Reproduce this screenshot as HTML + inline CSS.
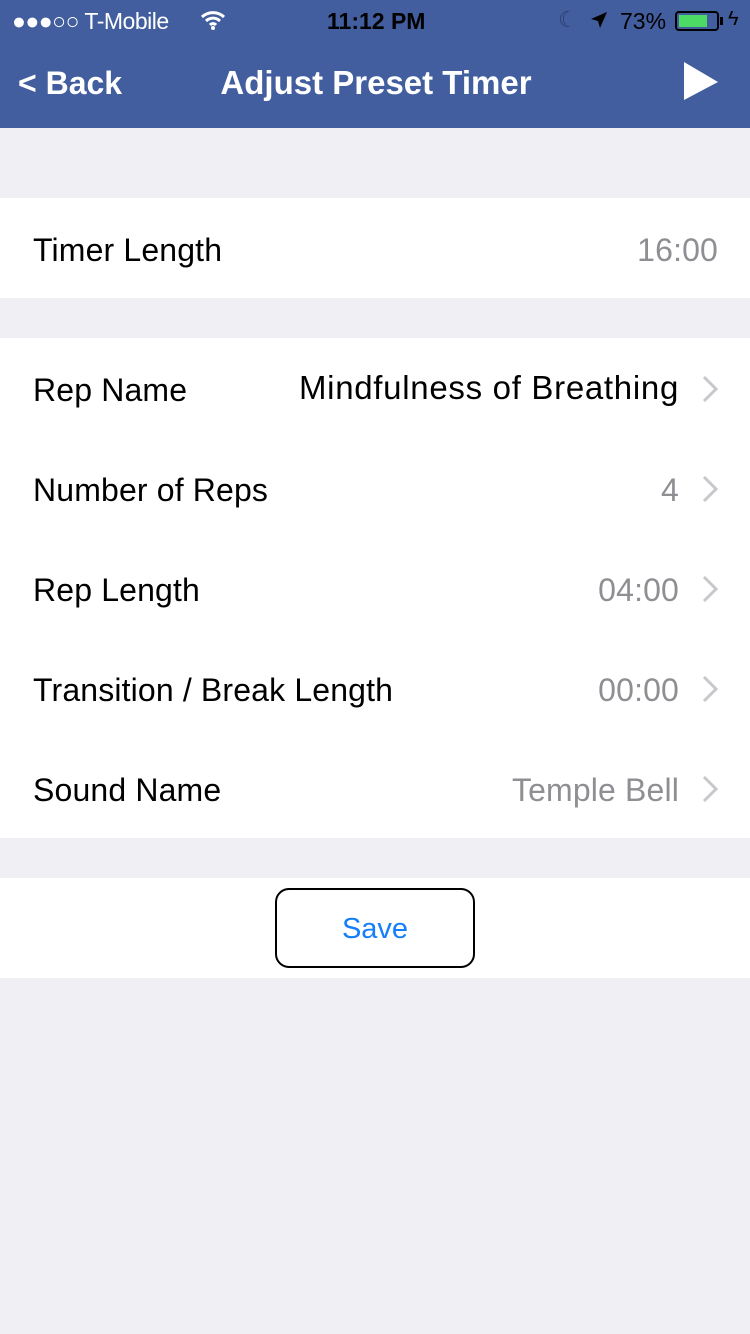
<!DOCTYPE html>
<html><head><meta charset="utf-8"><style>
*{margin:0;padding:0;box-sizing:border-box}
body{width:750px;height:1334px;background:#efeff4;font-family:"Liberation Sans",sans-serif;position:relative;overflow:hidden}
.nav{position:absolute;left:0;top:0;width:750px;height:128px;background:#425e9e;color:#fff}
.abs{position:absolute;white-space:nowrap}
.sec{position:absolute;left:0;width:750px;background:#fff}
.row{position:absolute;left:0;width:750px;height:100px;font-size:32px;letter-spacing:0.15px;color:#000}
.row .l{position:absolute;left:33px;top:34px}
.row .v{position:absolute;right:71px;top:34px;color:#8e8e93}
.row svg{position:absolute;right:32px;top:37px}
</style></head><body>
<div class="nav">
 <div class="abs" style="left:12px;top:8px;font-size:23px;color:#fff;letter-spacing:-0.5px">●●●○○ T-Mobile</div>
 <svg class="abs" style="left:200px;top:10px" width="26" height="20" viewBox="0 0 26 20"><path d="M2 7a16 16 0 0 1 22 0M6 11a10 10 0 0 1 14 0M10 15a4 4 0 0 1 6 0" stroke="#fff" stroke-width="3" fill="none"/><circle cx="13" cy="18" r="2" fill="#fff"/></svg>
 <div class="abs" style="left:327px;top:8px;font-size:23px;font-weight:bold;color:#000">11:12 PM</div>
 <div class="abs" style="left:558px;top:7px;font-size:22px;color:#2a3e70">☾</div>
 <svg class="abs" style="left:590px;top:11px" width="18" height="18" viewBox="0 0 18 18"><path d="M17 1L1 8l7 2 2 7z" fill="#000"/></svg>
 <div class="abs" style="left:620px;top:8px;font-size:23px;color:#000">73%</div>
 <div class="abs" style="left:675px;top:11px;width:44px;height:20px;border:2px solid #000;border-radius:4px"><div style="margin:2px;width:28px;height:12px;background:#4cd964"></div></div>
 <div class="abs" style="left:720px;top:17px;width:3px;height:8px;background:#000"></div>
 <div class="abs" style="left:728px;top:8px;font-size:20px;color:#000">ϟ</div>
 <div class="abs" style="left:18px;top:65px;font-size:32px;font-weight:bold">&lt; Back</div>
 <div class="abs" style="left:0;width:750px;text-align:center;top:64px;font-size:33px;font-weight:bold;padding-left:2px">Adjust Preset Timer</div>
 <svg class="abs" style="left:684px;top:62px" width="36" height="40"><path d="M0 0L34 20L0 38z" fill="#fff"/></svg>
</div>
<div class="sec" style="top:198px;height:100px">
 <div class="row" style="top:0"><span class="l">Timer Length</span><span class="v" style="right:32px;color:#8e8e93">16:00</span></div>
</div>
<div class="sec" style="top:338px;height:500px">
 <div class="row" style="top:0"><span class="l">Rep Name</span><span class="v" style="color:#000;top:31px;font-size:33px;letter-spacing:0.7px">Mindfulness of Breathing</span><svg width="16" height="28"><path d="M2 2l12 12L2 26" stroke="#c7c7cc" stroke-width="3" fill="none"/></svg></div>
 <div class="row" style="top:100px"><span class="l">Number of Reps</span><span class="v">4</span><svg width="16" height="28"><path d="M2 2l12 12L2 26" stroke="#c7c7cc" stroke-width="3" fill="none"/></svg></div>
 <div class="row" style="top:200px"><span class="l">Rep Length</span><span class="v">04:00</span><svg width="16" height="28"><path d="M2 2l12 12L2 26" stroke="#c7c7cc" stroke-width="3" fill="none"/></svg></div>
 <div class="row" style="top:300px"><span class="l">Transition / Break Length</span><span class="v">00:00</span><svg width="16" height="28"><path d="M2 2l12 12L2 26" stroke="#c7c7cc" stroke-width="3" fill="none"/></svg></div>
 <div class="row" style="top:400px"><span class="l">Sound Name</span><span class="v">Temple Bell</span><svg width="16" height="28"><path d="M2 2l12 12L2 26" stroke="#c7c7cc" stroke-width="3" fill="none"/></svg></div>
</div>
<div class="sec" style="top:878px;height:100px">
 <div class="abs" style="left:275px;top:10px;width:200px;height:80px;border:2px solid #000;border-radius:14px;text-align:center;line-height:78px;font-size:29px;color:#147efb">Save</div>
</div>
</body></html>
